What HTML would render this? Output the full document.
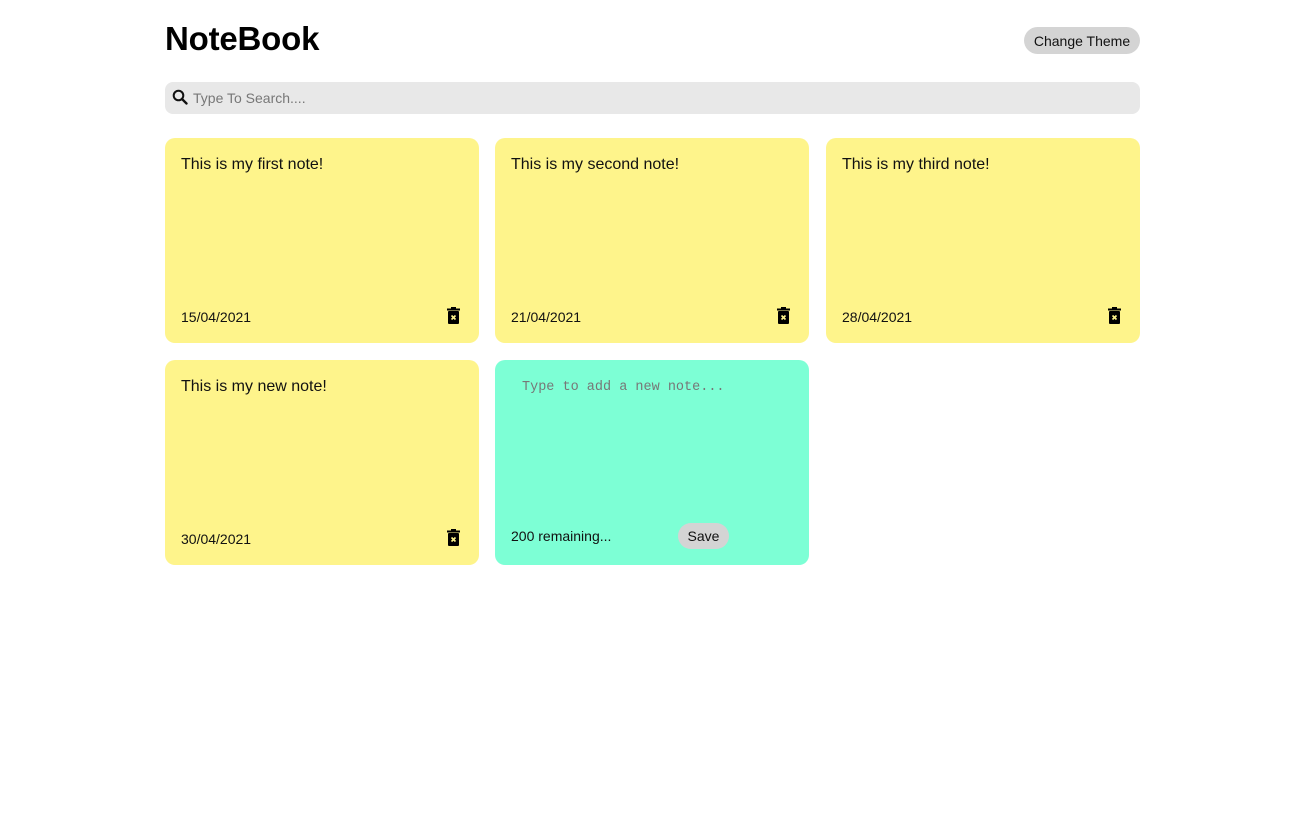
<!DOCTYPE html>
<html><head><style>
body{margin:0;background:#fff;font-family:"Liberation Sans",sans-serif;width:1305px;height:813px;position:relative;overflow:hidden}
.a{position:absolute}
h1{position:absolute;left:165px;top:20px;margin:0;font-size:33px;font-weight:bold;letter-spacing:-0.2px;color:#000}
.btn{position:absolute;left:1024px;top:27px;width:116px;height:27px;border-radius:14px;background:#d4d4d4;font-size:14px;line-height:28px;text-align:center;color:#111}
.search{position:absolute;left:165px;top:82px;width:975px;height:32px;border-radius:8px;background:#e8e8e8}
.search span{position:absolute;left:28px;top:8px;font-size:14px;color:#777}
.card{position:absolute;width:314px;height:205px;border-radius:10px;background:#fef48b}
.card .t{position:absolute;left:16px;top:18px;font-size:16px;color:#111}
.card .d{position:absolute;left:16px;top:171px;font-size:14px;color:#111}
.card svg{position:absolute;right:19px;top:169px}
</style></head><body>
<h1>NoteBook</h1>
<div class="btn">Change Theme</div>
<div class="search"><svg class="a" style="left:7px;top:7px" width="16" height="16" viewBox="0 0 16 16"><circle cx="6.5" cy="6.5" r="4.8" fill="none" stroke="#111" stroke-width="2"/><path d="M10 10l4.5 4.5" stroke="#111" stroke-width="2.3" stroke-linecap="round"/></svg><span>Type To Search....</span></div>
<div class="card" style="left:165px;top:138px"><div class="t">This is my first note!</div><div class="d">15/04/2021</div><svg width="13" height="17" viewBox="0 0 13 17"><rect x="0" y="1.5" width="13" height="2" fill="#000"/><rect x="4" y="0" width="5" height="2" fill="#000"/><rect x="1" y="4" width="11" height="13" rx="1" fill="#000"/><path d="M4.5 8.5l4 4M8.5 8.5l-4 4" stroke="#fef48b" stroke-width="1.6"/></svg></div>
<div class="card" style="left:495px;top:138px"><div class="t">This is my second note!</div><div class="d">21/04/2021</div><svg width="13" height="17" viewBox="0 0 13 17"><rect x="0" y="1.5" width="13" height="2" fill="#000"/><rect x="4" y="0" width="5" height="2" fill="#000"/><rect x="1" y="4" width="11" height="13" rx="1" fill="#000"/><path d="M4.5 8.5l4 4M8.5 8.5l-4 4" stroke="#fef48b" stroke-width="1.6"/></svg></div>
<div class="card" style="left:826px;top:138px"><div class="t">This is my third note!</div><div class="d">28/04/2021</div><svg width="13" height="17" viewBox="0 0 13 17"><rect x="0" y="1.5" width="13" height="2" fill="#000"/><rect x="4" y="0" width="5" height="2" fill="#000"/><rect x="1" y="4" width="11" height="13" rx="1" fill="#000"/><path d="M4.5 8.5l4 4M8.5 8.5l-4 4" stroke="#fef48b" stroke-width="1.6"/></svg></div>
<div class="card" style="left:165px;top:360px"><div class="t">This is my new note!</div><div class="d">30/04/2021</div><svg width="13" height="17" viewBox="0 0 13 17"><rect x="0" y="1.5" width="13" height="2" fill="#000"/><rect x="4" y="0" width="5" height="2" fill="#000"/><rect x="1" y="4" width="11" height="13" rx="1" fill="#000"/><path d="M4.5 8.5l4 4M8.5 8.5l-4 4" stroke="#fef48b" stroke-width="1.6"/></svg></div>
<div class="card" style="left:495px;top:360px;background:#7dffd5">
<div class="a" style="left:27px;top:20px;font-family:'Liberation Mono',monospace;font-size:13.5px;color:#777">Type to add a new note...</div>
<div class="a" style="left:16px;top:168px;font-size:14px;color:#111">200 remaining...</div>
<div class="a" style="left:183px;top:163px;width:51px;height:26px;border-radius:13px;background:#d4d4d4;font-size:14px;line-height:26px;text-align:center;color:#111">Save</div>
</div>
</body></html>
